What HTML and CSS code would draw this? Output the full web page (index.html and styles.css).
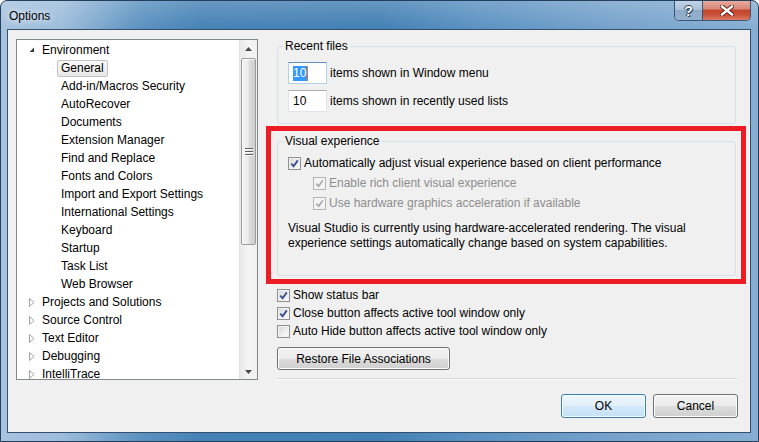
FILE: index.html
```html
<!DOCTYPE html>
<html>
<head>
<meta charset="utf-8">
<title>Options</title>
<link rel="stylesheet" href="styles.css">
</head>
<body>
<div class="window">
  <div class="titlebar">
    <span class="title">Options</span>
    <div class="caption-btns">
      <div class="cap help">?</div>
      <div class="cap close">
        <svg width="14" height="11" viewBox="0 0 14 11"><path d="M2 1.5 L12 9.5 M12 1.5 L2 9.5" stroke="#5a1a10" stroke-width="4.2" stroke-linecap="square" fill="none"/><path d="M2 1.5 L12 9.5 M12 1.5 L2 9.5" stroke="#fff" stroke-width="2.4" stroke-linecap="square" fill="none"/></svg>
      </div>
    </div>
  </div>
  <div class="client">
    <div class="tree">
      <div class="tree-list">
        <div class="row root"><span class="exp"><svg width="6" height="6" viewBox="0 0 6 6"><polygon points="5,0.5 5,5 0.5,5" fill="#3c3c3c"/></svg></span><span>Environment</span></div>
        <div class="row child selected"><span class="label">General</span></div>
        <div class="row child"><span>Add-in/Macros Security</span></div>
        <div class="row child"><span>AutoRecover</span></div>
        <div class="row child"><span>Documents</span></div>
        <div class="row child"><span>Extension Manager</span></div>
        <div class="row child"><span>Find and Replace</span></div>
        <div class="row child"><span>Fonts and Colors</span></div>
        <div class="row child"><span>Import and Export Settings</span></div>
        <div class="row child"><span>International Settings</span></div>
        <div class="row child"><span>Keyboard</span></div>
        <div class="row child"><span>Startup</span></div>
        <div class="row child"><span>Task List</span></div>
        <div class="row child"><span>Web Browser</span></div>
        <div class="row root"><span class="exp"><svg width="6" height="9" viewBox="0 0 6 9"><path d="M0.5 0.5 L5 4.5 L0.5 8.5 Z" fill="#fff" stroke="#a2a2a2"/></svg></span><span>Projects and Solutions</span></div>
        <div class="row root"><span class="exp"><svg width="6" height="9" viewBox="0 0 6 9"><path d="M0.5 0.5 L5 4.5 L0.5 8.5 Z" fill="#fff" stroke="#a2a2a2"/></svg></span><span>Source Control</span></div>
        <div class="row root"><span class="exp"><svg width="6" height="9" viewBox="0 0 6 9"><path d="M0.5 0.5 L5 4.5 L0.5 8.5 Z" fill="#fff" stroke="#a2a2a2"/></svg></span><span>Text Editor</span></div>
        <div class="row root"><span class="exp"><svg width="6" height="9" viewBox="0 0 6 9"><path d="M0.5 0.5 L5 4.5 L0.5 8.5 Z" fill="#fff" stroke="#a2a2a2"/></svg></span><span>Debugging</span></div>
        <div class="row root"><span class="exp"><svg width="6" height="9" viewBox="0 0 6 9"><path d="M0.5 0.5 L5 4.5 L0.5 8.5 Z" fill="#fff" stroke="#a2a2a2"/></svg></span><span>IntelliTrace</span></div>
      </div>
      <div class="vscroll">
        <div class="sb-btn"><svg width="7" height="4" viewBox="0 0 7 4"><polygon points="3.5,0 7,4 0,4" fill="#4a4a4a"/></svg></div>
        <div class="sb-track">
          <div class="thumb">
            <svg width="8" height="8" viewBox="0 0 8 8"><rect x="0" y="0" width="8" height="1" fill="#5e5e5e"/><rect x="0" y="1" width="8" height="1" fill="#fff"/><rect x="0" y="3" width="8" height="1" fill="#5e5e5e"/><rect x="0" y="4" width="8" height="1" fill="#fff"/><rect x="0" y="6" width="8" height="1" fill="#5e5e5e"/><rect x="0" y="7" width="8" height="1" fill="#fff"/></svg>
          </div>
        </div>
        <div class="sb-btn down"><svg width="7" height="4" viewBox="0 0 7 4"><polygon points="0,0 7,0 3.5,4" fill="#4a4a4a"/></svg></div>
      </div>
    </div>

    <div class="panel">
      <fieldset class="group recent">
        <legend>Recent files</legend>
        <div class="num-row"><span class="textbox focused"><span class="sel">10</span></span><span>items shown in Window menu</span></div>
        <div class="num-row"><span class="textbox">10</span><span>items shown in recently used lists</span></div>
      </fieldset>

      <div class="highlight">
        <fieldset class="group visual">
          <legend>Visual experience</legend>
          <div class="check"><span class="cb"><svg width="9" height="9" viewBox="0 0 9 9"><path d="M1.3 4.6 L3.6 7.2 L7.8 1.4" stroke="#3d4f8f" stroke-width="1.9" fill="none"/></svg></span><span>Automatically adjust visual experience based on client performance</span></div>
          <div class="check sub disabled"><span class="cb"><svg width="9" height="9" viewBox="0 0 9 9"><path d="M1.3 4.6 L3.6 7.2 L7.8 1.4" stroke="#a5a5a5" stroke-width="1.6" fill="none"/></svg></span><span>Enable rich client visual experience</span></div>
          <div class="check sub disabled"><span class="cb"><svg width="9" height="9" viewBox="0 0 9 9"><path d="M1.3 4.6 L3.6 7.2 L7.8 1.4" stroke="#a5a5a5" stroke-width="1.6" fill="none"/></svg></span><span>Use hardware graphics acceleration if available</span></div>
          <p class="note">Visual Studio is currently using hardware-accelerated rendering. The visual<br>experience settings automatically change based on system capabilities.</p>
        </fieldset>
      </div>

      <div class="checks">
        <div class="check"><span class="cb"><svg width="9" height="9" viewBox="0 0 9 9"><path d="M1.3 4.6 L3.6 7.2 L7.8 1.4" stroke="#3d4f8f" stroke-width="1.9" fill="none"/></svg></span><span>Show status bar</span></div>
        <div class="check"><span class="cb"><svg width="9" height="9" viewBox="0 0 9 9"><path d="M1.3 4.6 L3.6 7.2 L7.8 1.4" stroke="#3d4f8f" stroke-width="1.9" fill="none"/></svg></span><span>Close button affects active tool window only</span></div>
        <div class="check"><span class="cb"></span><span>Auto Hide button affects active tool window only</span></div>
      </div>

      <button class="btn restore">Restore File Associations</button>
      <div class="separator"></div>
      <div class="actions">
        <button class="btn default">OK</button>
        <button class="btn">Cancel</button>
      </div>
    </div>
  </div>
</div>
</body>
</html>
```

FILE: styles.css
```css
html, body {
  margin: 0;
  padding: 0;
  background: #ffffff;
}

body {
  font-family: "Liberation Sans", Arial, sans-serif;
  font-size: 12px;
  color: #000;
}

.window {
  width: 759px;
  height: 442px;
  box-sizing: border-box;
  border: 1px solid #243f5c;
  border-radius: 7px 7px 0 0;
  padding: 0 7px 8px 6px;
  display: flex;
  flex-direction: column;
  background:
    linear-gradient(to bottom, rgba(255,255,255,0.18), rgba(255,255,255,0) 28px),
    linear-gradient(to right, #a6c3df 0, #9dbddb 60px, #5b91c0 140px, #4682b5 200px, #4380b4 380px, #5a91c1 470px, #77a3cc 620px, #86aed2 759px);
}

.titlebar {
  height: 28px;
  flex-shrink: 0;
  display: flex;
  justify-content: space-between;
  align-items: flex-start;
}

.title {
  padding: 8px 0 0 2px;
  line-height: 15px;
  color: #000;
  text-shadow: 0 0 6px rgba(255,255,255,0.9), 0 0 10px rgba(255,255,255,0.6);
}

.caption-btns {
  display: flex;
  height: 20px;
  box-sizing: border-box;
  border: 1px solid #3a5676;
  border-top: 0;
  border-radius: 0 0 5px 5px;
  overflow: hidden;
}

.cap {
  height: 19px;
  display: flex;
  align-items: center;
  justify-content: center;
}

.cap.help {
  width: 27px;
  border-right: 1px solid #3a5676;
  background: linear-gradient(#c3d4e6 0%, #a9c0d8 45%, #8eaac7 50%, #93b1cf 100%);
  color: #fff;
  font-weight: bold;
  font-size: 14px;
  text-shadow: 0 0 1px #1d3550, 1px 1px 0 #2b4664, -1px 0 0 #2b4664, 0 -1px 0 #2b4664;
}

.cap.close {
  width: 47px;
  background: linear-gradient(#e6aa9e 0%, #d88878 40%, #c6452c 50%, #c9533b 75%, #dc7c62 100%);
}

.client {
  flex: 1;
  border: 1px solid #34506e;
  background: #f0f0f0;
  display: flex;
  align-items: flex-start;
}

/* Tree */
.tree {
  margin: 9px 0 0 8px;
  width: 242px;
  height: 341px;
  box-sizing: border-box;
  border: 1px solid #828790;
  background: #fff;
  display: flex;
}

.tree-list {
  flex: 1;
  overflow: hidden;
  padding-top: 1px;
}

.row {
  height: 18px;
  display: flex;
  align-items: center;
  white-space: nowrap;
  color: #000;
}

.row.root {
  padding-left: 12px;
}

.row.child {
  padding-left: 44px;
}

.exp {
  width: 13px;
  display: flex;
  align-items: center;
}

.row.selected .label {
  margin-left: -4px;
  padding: 0 3px;
  line-height: 15px;
  border: 1px solid #c3c3c3;
  border-radius: 2px;
  background: linear-gradient(#f8f8f8, #e7e7e7);
}

.vscroll {
  width: 18px;
  box-sizing: border-box;
  border-left: 1px solid #e3e3e3;
  background: linear-gradient(to right, #e9e9e9, #f4f4f4 50%, #f0f0f0);
  display: flex;
  flex-direction: column;
}

.sb-btn {
  height: 18px;
  display: flex;
  align-items: center;
  justify-content: center;
  flex-shrink: 0;
}

.sb-btn.down {
  align-items: flex-end;
  padding-bottom: 5px;
  box-sizing: border-box;
}

.sb-track {
  flex: 1;
  padding: 0 1px;
}

.thumb {
  height: 187px;
  box-sizing: border-box;
  border: 1px solid #9a9a9a;
  border-radius: 2px;
  background: linear-gradient(to right, #f4f4f4 0%, #ececec 45%, #dcdcdc 55%, #cdcdcd 100%);
  box-shadow: inset 1px 1px 0 #fbfbfb;
  display: flex;
  align-items: center;
  justify-content: center;
}

/* Right panel */
.panel {
  margin: 9px 0 0 19px;
  width: 461px;
  display: flex;
  flex-direction: column;
}

.group {
  margin: 0;
  width: 459px;
  box-sizing: border-box;
  min-width: 0;
  border: 1px solid #d5dfe5;
  border-radius: 3px;
}

.group legend {
  margin-left: -5px;
  padding: 0 2px;
  line-height: 15px;
}

.recent {
  padding: 8px 10px 11px 10px;
  display: flex;
  flex-direction: column;
  gap: 6px;
}

.num-row {
  display: flex;
  align-items: center;
  gap: 3px;
}

.textbox {
  width: 39px;
  height: 22px;
  box-sizing: border-box;
  border: 1px solid #e2e3ea;
  border-top-color: #abadb3;
  background: #fff;
  padding-left: 4px;
  display: flex;
  align-items: center;
}

.textbox.focused {
  border-color: #b5cfe7;
  border-top-color: #5c93c4;
}

.sel {
  background: #3399ff;
  color: #fff;
  line-height: 15px;
  padding-right: 1px;
  border-right: 1px solid #e07a20;
}

.highlight {
  margin: 2px -8px 0 -11px;
  border: 5px solid #ec1c24;
  padding: 3px 5px 3px 6px;
}

.visual {
  padding: 4px 10px 24px 10px;
}

.check {
  height: 20px;
  display: flex;
  align-items: center;
  gap: 3px;
  white-space: nowrap;
}

.check.sub {
  padding-left: 25px;
}

.check.disabled {
  color: #8d8d8d;
}

.cb {
  width: 13px;
  height: 13px;
  box-sizing: border-box;
  flex-shrink: 0;
  border: 1px solid #8e8f8f;
  background: linear-gradient(135deg, #cfd3d8 0%, #eeeeee 55%, #fbfbfb 100%);
  box-shadow: inset 0 0 0 1px #f3f3f3;
  display: flex;
  align-items: center;
  justify-content: center;
}

.check.disabled .cb {
  border-color: #b5b5b5;
  background: #f4f4f4;
}

.note {
  margin: 8px 0 0 0;
  line-height: 15px;
}

.checks {
  margin-top: 2px;
}

.checks .check {
  height: 18px;
}

.btn {
  font: inherit;
  color: #000;
  height: 23px;
  padding: 0;
  border: 1px solid #707070;
  border-radius: 3px;
  background: linear-gradient(#f2f2f2 0%, #ebebeb 50%, #dddddd 51%, #cfcfcf 100%);
  box-shadow: inset 0 0 0 1px #fbfbfb;
}

.restore {
  margin-top: 7px;
  width: 173px;
  align-self: flex-start;
}

.separator {
  margin-top: 8px;
  width: 460px;
  height: 1px;
  background: #d5d5d5;
  border-bottom: 1px solid #ffffff;
}

.actions {
  margin-top: 14px;
  display: flex;
  justify-content: flex-end;
  gap: 7px;
}

.actions .btn {
  width: 85px;
  height: 24px;
}

.btn.default {
  border-color: #3c7fb1;
  background: linear-gradient(#eef6fc 0%, #e1effa 50%, #d2e8f8 51%, #c6e1f5 100%);
  box-shadow: inset 0 0 0 1px #f6fbfe;
}
```
